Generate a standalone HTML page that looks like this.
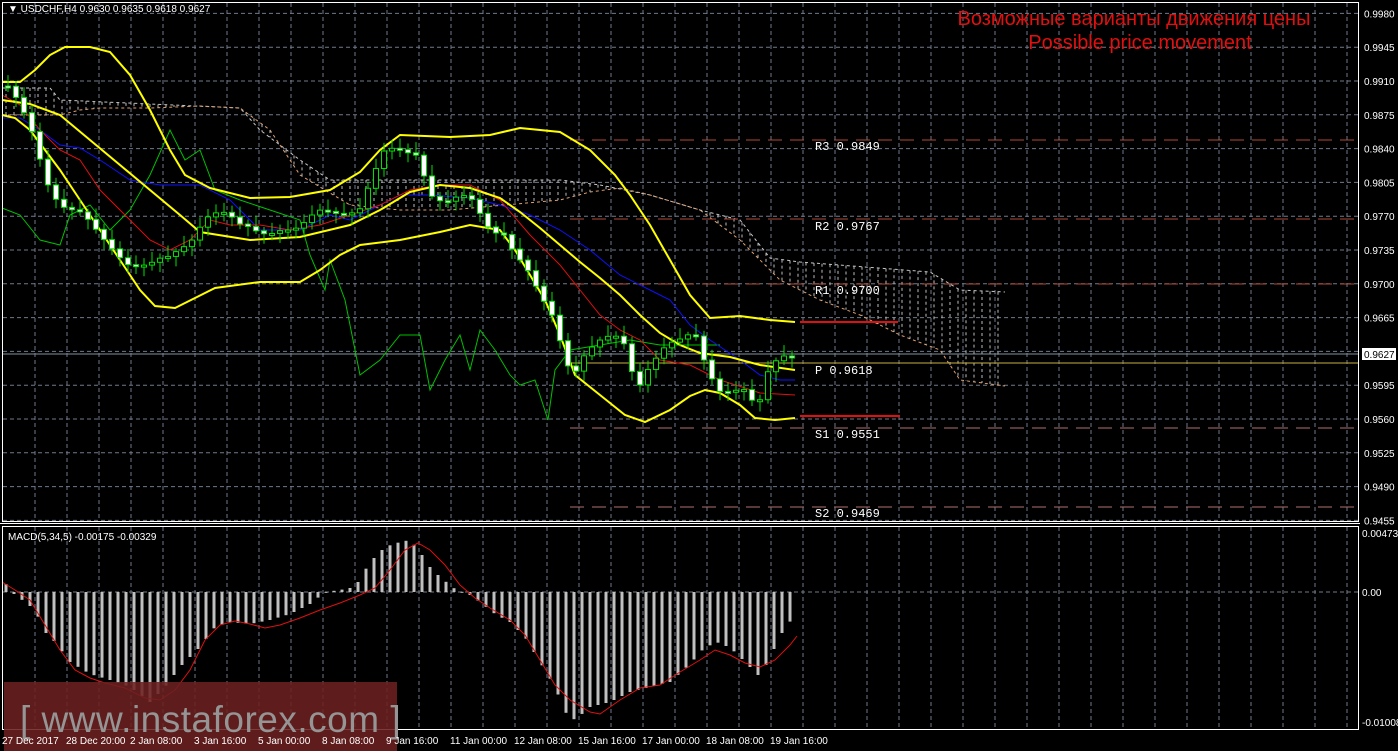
<!DOCTYPE html>
<html><head><meta charset="utf-8"><style>
html,body{margin:0;padding:0;background:#000;width:1398px;height:751px;overflow:hidden;font-family:"Liberation Sans",sans-serif}
svg{display:block}
</style></head><body>
<svg id="s" width="1398" height="751" xmlns="http://www.w3.org/2000/svg" font-family="Liberation Sans, sans-serif">
<rect width="1398" height="751" fill="#000"/>
<g id="grid" stroke="#6f7a8a" stroke-dasharray="4,3" stroke-width="1"></g>
<g id="cloud"></g>
<g stroke="#b04a3a" stroke-dasharray="14,8" stroke-width="1">
<line x1="570" y1="140" x2="1358" y2="140"/>
<line x1="570" y1="219" x2="1358" y2="219"/>
<line x1="570" y1="284" x2="1358" y2="284"/>
<line x1="570" y1="428" x2="1358" y2="428" stroke="#b07070"/>
<line x1="570" y1="507" x2="1358" y2="507" stroke="#b07070"/>
</g>
<line x1="570" y1="363" x2="1358" y2="363" stroke="#c8b040"/>
<line x1="2" y1="354" x2="1358" y2="354" stroke="#8090a0"/>
<line x1="800" y1="322" x2="898" y2="322" stroke="#e01010" stroke-width="2"/>
<line x1="800" y1="416" x2="900" y2="416" stroke="#e01010" stroke-width="2"/>
<g fill="#fff" font-family="Liberation Mono, monospace" font-size="12">
<text x="815" y="150">R3 0.9849</text><text x="815" y="230">R2 0.9767</text>
<text x="815" y="294">R1 0.9700</text><text x="815" y="374">P  0.9618</text>
<text x="815" y="438">S1 0.9551</text><text x="815" y="517">S2 0.9469</text>
</g>
<polyline fill="none" stroke="#00c000" stroke-width="1" points="2,208 20,215 40,240 60,245 70,215 90,205 110,230 130,210 150,175 170,130 185,160 200,150 215,190 240,200 270,210 300,220 310,255 325,290 330,260 345,300 360,375 380,360 400,335 420,335 430,390 445,360 460,335 470,370 480,330 495,350 510,375 520,385 535,380 548,420 555,370 570,350 600,345 630,340 660,345 690,345 720,345"/>
<polyline fill="none" stroke="#1010ff" stroke-width="1" points="2,118 20,118 40,130 60,145 80,148 100,160 130,180 160,185 200,185 230,200 260,230 300,230 330,215 350,220 370,210 400,195 430,195 470,198 500,205 530,215 560,230 590,250 620,275 650,290 670,300 690,325 710,340 740,360 760,375 780,380 795,380"/>
<polyline fill="none" stroke="#e01010" stroke-width="1" points="2,95 20,105 40,130 60,150 80,160 100,190 130,220 150,240 170,250 190,240 210,220 230,225 260,225 290,230 320,225 350,215 380,205 410,190 440,185 470,185 500,200 530,235 560,265 580,290 600,315 620,330 640,340 660,360 690,365 720,380 745,388 760,393 795,395"/>
<g fill="none" stroke="#ffff00" stroke-width="2">
<polyline points="2,82 20,82 35,70 50,55 65,47 90,47 110,52 130,75 150,110 170,150 185,175 210,188 250,198 290,197 330,190 360,172 380,150 400,135 450,137 490,135 520,128 560,132 590,150 615,175 630,195 650,225 670,260 690,295 710,318 740,316 770,320 795,322"/>
<polyline points="2,100 30,104 60,115 90,140 120,165 150,190 180,215 200,232 250,240 300,237 350,225 380,210 410,192 440,185 470,188 500,198 520,212 540,228 560,245 580,262 600,278 620,295 640,315 660,333 680,345 700,353 730,357 760,365 795,370"/>
<polyline points="2,115 15,118 30,130 45,150 60,170 80,200 100,230 120,260 140,290 155,306 175,308 195,298 215,288 260,282 300,282 320,270 340,255 360,245 400,240 440,232 470,225 500,230 515,250 530,275 545,300 560,335 575,375 600,395 625,415 645,422 670,410 690,396 705,390 720,393 740,405 755,418 775,420 795,418"/>
</g>
<g id="candles"></g>
<g id="macd"></g>
<polyline fill="none" stroke="#e01010" stroke-width="1" points="2,582 15,590 30,600 45,625 60,650 75,670 90,678 105,683 125,688 145,698 160,700 175,690 190,670 205,640 220,625 235,621 250,624 265,628 280,625 300,618 320,610 340,603 360,595 375,588 390,570 405,550 418,543 430,550 445,565 460,585 475,598 490,608 510,620 525,635 540,660 555,685 570,700 590,712 600,714 620,700 640,688 660,685 680,672 700,660 715,650 730,655 745,663 760,667 775,660 790,645 797,636"/>
<rect x="2.5" y="2.5" width="1356" height="519" fill="none" stroke="#fff"/>
<rect x="2.5" y="526.5" width="1356" height="203" fill="none" stroke="#fff"/>
<rect x="0" y="523" width="1360" height="1" fill="#fff"/>
<g fill="#fff" font-size="10">
<text x="8" y="12">▼ USDCHF,H4  0.9630 0.9635 0.9618 0.9627</text>
<text x="8" y="540">MACD(5,34,5) -0.00175 -0.00329</text>
</g>
<g id="axis" fill="#fff" font-size="10"></g>
<rect x="1362" y="348" width="34" height="12" fill="#fff"/>
<text x="1364" y="358" font-size="10" fill="#000">0.9627</text>
<g fill="#e01010" font-size="20" text-anchor="middle">
<text x="1134" y="25">Возможные варианты движения цены</text>
<text x="1140" y="49">Possible price movement</text>
</g>
<rect x="4" y="682" width="393" height="69" fill="#6b2020" fill-opacity="0.88"/>
<text x="20" y="732" font-size="37" fill="#959595" letter-spacing="0.5">[ www.instaforex.com ]</text>
<g id="taxis" fill="#fff" font-size="10"></g>
</svg>
<script>
var NS="http://www.w3.org/2000/svg";
function el(p,t,a,txt){var e=document.createElementNS(NS,t);for(var k in a)e.setAttribute(k,a[k]);if(txt)e.textContent=txt;document.getElementById(p).appendChild(e);return e;}
(function(){
var x,i,y;
for(x=35;x<1358;x+=32){el('grid','line',{x1:x,y1:3,x2:x,y2:521});el('grid','line',{x1:x,y1:527,x2:x,y2:729});}
var prices=["0.9980","0.9945","0.9910","0.9875","0.9840","0.9805","0.9770","0.9735","0.9700","0.9665","0.9630","0.9595","0.9560","0.9525","0.9490","0.9455"];
for(i=0;i<prices.length;i++){y=13.4+i*33.8;el('grid','line',{x1:3,y1:y,x2:1358,y2:y});if(i!=10)el('axis','text',{x:1364,y:y+4},prices[i]);}
el('grid','line',{x1:3,y1:592,x2:1358,y2:592});
el('axis','text',{x:1362,y:537},"0.00473");el('axis','text',{x:1362,y:596},"0.00");el('axis','text',{x:1362,y:726},"-0.01008");
var tl=["27 Dec 2017","28 Dec 20:00","2 Jan 08:00","3 Jan 16:00","5 Jan 00:00","8 Jan 08:00","9 Jan 16:00","11 Jan 00:00","12 Jan 08:00","15 Jan 16:00","17 Jan 00:00","18 Jan 08:00","19 Jan 16:00"];
for(i=0;i<tl.length;i++){el('taxis','text',{x:i==0?2:66+64*(i-1),y:744},tl[i]);}
var cu=[[2,88],[50,88],[60,100],[240,108],[260,130],[300,160],[330,180],[420,180],[500,180],[560,180],[600,185],[650,195],[700,210],[740,220],[770,258],[800,262],[930,272],[960,290],[1005,292]];
var cl=[[2,115],[60,115],[80,110],[100,108],[150,108],[200,106],[240,108],[270,130],[300,175],[350,205],[400,210],[450,210],[560,200],[590,192],[620,188],[650,195],[700,210],[740,240],[780,280],[820,300],[860,315],[900,335],[940,350],[960,380],[1005,386]];
function interp(a,xx){if(xx<=a[0][0])return a[0][1];for(var j=0;j<a.length-1;j++){if(xx>=a[j][0]&&xx<=a[j+1][0]){var t=(xx-a[j][0])/(a[j+1][0]-a[j][0]);return a[j][1]+t*(a[j+1][1]-a[j][1]);}}return a[a.length-1][1];}
el('cloud','polyline',{points:cu.map(function(p){return p.join(',');}).join(' '),fill:'none',stroke:'#c8c8c8','stroke-dasharray':'3,3'});
el('cloud','polyline',{points:cl.map(function(p){return p.join(',');}).join(' '),fill:'none',stroke:'#e0a070','stroke-dasharray':'3,3'});
for(x=6;x<1005;x+=8){var ua=interp(cu,x),lb=interp(cl,x);el('cloud','line',{x1:x,y1:Math.min(ua,lb),x2:x,y2:Math.max(ua,lb),stroke:'#bbbbbb','stroke-dasharray':'3,3','stroke-width':1});}
var cp=[[8,90],[20,110],[35,140],[45,175],[60,200],[80,215],[100,240],[115,250],[130,260],[150,265],[170,262],[190,240],[205,212],[220,210],[240,230],[260,232],[280,225],[300,230],[320,215],[340,210],[360,205],[372,180],[385,155],[400,152],[418,150],[430,190],[445,205],[470,200],[490,225],[505,230],[515,255],[525,270],[540,300],[552,315],[563,345],[572,372],[585,352],[600,345],[615,340],[625,345],[637,385],[650,360],[665,348],[680,345],[695,335],[705,360],[718,385],[735,390],[748,395],[757,420],[765,380],[775,360],[785,350],[793,352]];
var prev=interp(cp,0)-4;
for(x=8;x<=793;x+=8){var cc=interp(cp,x)+Math.sin(x*0.7)*6;var oo=prev;var bt=Math.min(oo,cc),bb=Math.max(oo,cc);if(bb-bt<2)bb=bt+2;
el('candles','line',{x1:x,y1:bt-3-Math.abs(Math.sin(x))*8,x2:x,y2:bb+3+Math.abs(Math.cos(x))*7,stroke:'#00e000'});
el('candles','rect',{x:x-2.5,y:bt,width:5,height:bb-bt,fill:cc>oo?'#fff':'#000',stroke:'#00e000'});prev=cc;}
var mp=[[6,-8],[14,2],[25,10],[35,18],[45,40],[55,50],[70,70],[90,82],[110,88],[130,95],[150,110],[165,95],[180,75],[200,55],[215,35],[230,30],[250,32],[270,28],[290,22],[310,12],[325,0],[340,-2],[355,-5],[370,-30],[385,-45],[400,-50],[410,-52],[420,-40],[430,-25],[440,-15],[455,-3],[470,3],[480,10],[495,22],[510,30],[525,45],[540,70],[555,95],[565,120],[575,128],[590,115],[610,110],[630,100],[650,95],[670,90],[690,72],[705,55],[720,50],[735,60],[750,75],[760,85],[770,65],[785,35],[797,22]];
for(x=6;x<=797;x+=8){var v=interp(mp,x);el('macd','rect',{x:x-1.5,y:v<0?592+v:592,width:3,height:Math.max(1,Math.abs(v)),fill:'#c0c0c0'});}
})();
</script>
</body></html>
